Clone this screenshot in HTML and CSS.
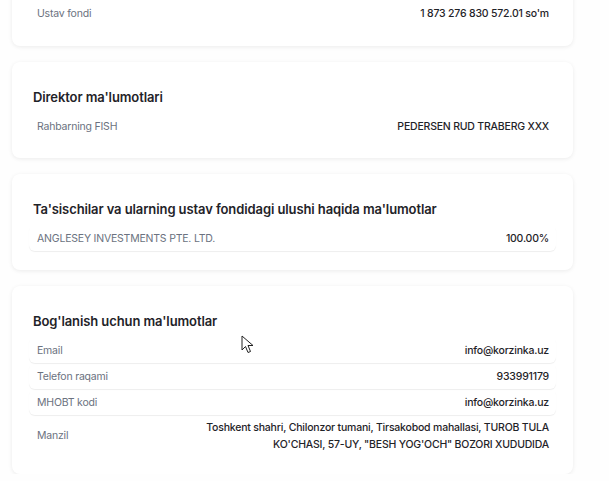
FILE: index.html
```html
<!DOCTYPE html>
<html lang="uz">
<head>
    <meta charset="UTF-8">
    <meta name="viewport" content="width=device-width, initial-scale=1.0">
    <title>Korxona ma'lumotlari</title>
    <link rel="stylesheet" href="styles.css">
</head>
<body>

    <div class="cards">
        <div class="card card-top">
            <div class="row flat">
                <span class="label">Ustav fondi</span>
                <span class="value">1 873 276 830 572.01 so'm</span>
            </div>
        </div>

        <div class="card">
            <h2>Direktor ma'lumotlari</h2>
            <div class="row flat">
                <span class="label">Rahbarning FISH</span>
                <span class="value">PEDERSEN RUD TRABERG XXX</span>
            </div>
        </div>

        <div class="card">
            <h2>Ta'sischilar va ularning ustav fondidagi ulushi haqida ma'lumotlar</h2>
            <div class="row">
                <span class="label">ANGLESEY INVESTMENTS PTE. LTD.</span>
                <span class="value">100.00%</span>
            </div>
        </div>

        <div class="card">
            <h2>Bog'lanish uchun ma'lumotlar</h2>
            <div class="row">
                <span class="label">Email</span>
                <span class="value">info@korzinka.uz</span>
            </div>
            <div class="row">
                <span class="label">Telefon raqami</span>
                <span class="value">933991179</span>
            </div>
            <div class="row">
                <span class="label">MHOBT kodi</span>
                <span class="value">info@korzinka.uz</span>
            </div>
            <div class="row flat">
                <span class="label">Manzil</span>
                <span class="value address">Toshkent shahri, Chilonzor tumani, Tirsakobod mahallasi, TUROB TULA KO'CHASI, 57-UY, "BESH YOG'OCH" BOZORI XUDUDIDA</span>
            </div>
        </div>
    </div>

    <!-- sichqoncha ko'rsatkichi -->
    <svg class="cursor" width="13" height="20" viewBox="0 0 13 20">
        <path d="M1 1 L1 15 L4.5 11.5 L7 17.5 L9.5 16.5 L7 10.5 L12 10.5 Z" fill="#fff" stroke="#222" stroke-width="1" stroke-linejoin="round"/>
    </svg>

</body>
</html>
```

FILE: styles.css
```css
body {
    font-family: Inter, "Noto Sans", sans-serif;
    background-color: #fefefe;
    margin: 0;
    padding: 0 36px 0 12px;
    color: #1f2328;
}
.cards {
    display: flex;
    flex-direction: column;
    gap: 16px;
    margin-top: -20px;
}
.card {
    background-color: white;
    border-radius: 8px;
    box-shadow: 0 1px 4px rgba(0, 0, 0, 0.08);
    padding: 26px 17px 19px;
}
.card-top {
    padding-top: 20px;
    padding-bottom: 20px;
}
h2 {
    font-size: 13px;
    font-weight: 600;
    margin: 0 0 7px 4px;
    line-height: 18px;
    letter-spacing: -0.1px;
}
.row {
    display: flex;
    justify-content: space-between;
    align-items: center;
    gap: 20px;
    min-height: 26px;
    padding: 0 7px 0 8px;
    border-radius: 6px;
    box-shadow: 0 1px 1px rgba(0, 0, 0, 0.07);
    font-size: 10.5px;
    letter-spacing: -0.2px;
}
.row.flat {
    box-shadow: none;
}
.label {
    color: #6b7280;
}
.value {
    color: #1f2328;
    font-weight: 500;
    text-align: right;
}
.address {
    max-width: 360px;
    line-height: 17px;
    padding: 4px 0 2px;
}
.cursor {
    position: absolute;
    left: 241px;
    top: 335px;
}
```
